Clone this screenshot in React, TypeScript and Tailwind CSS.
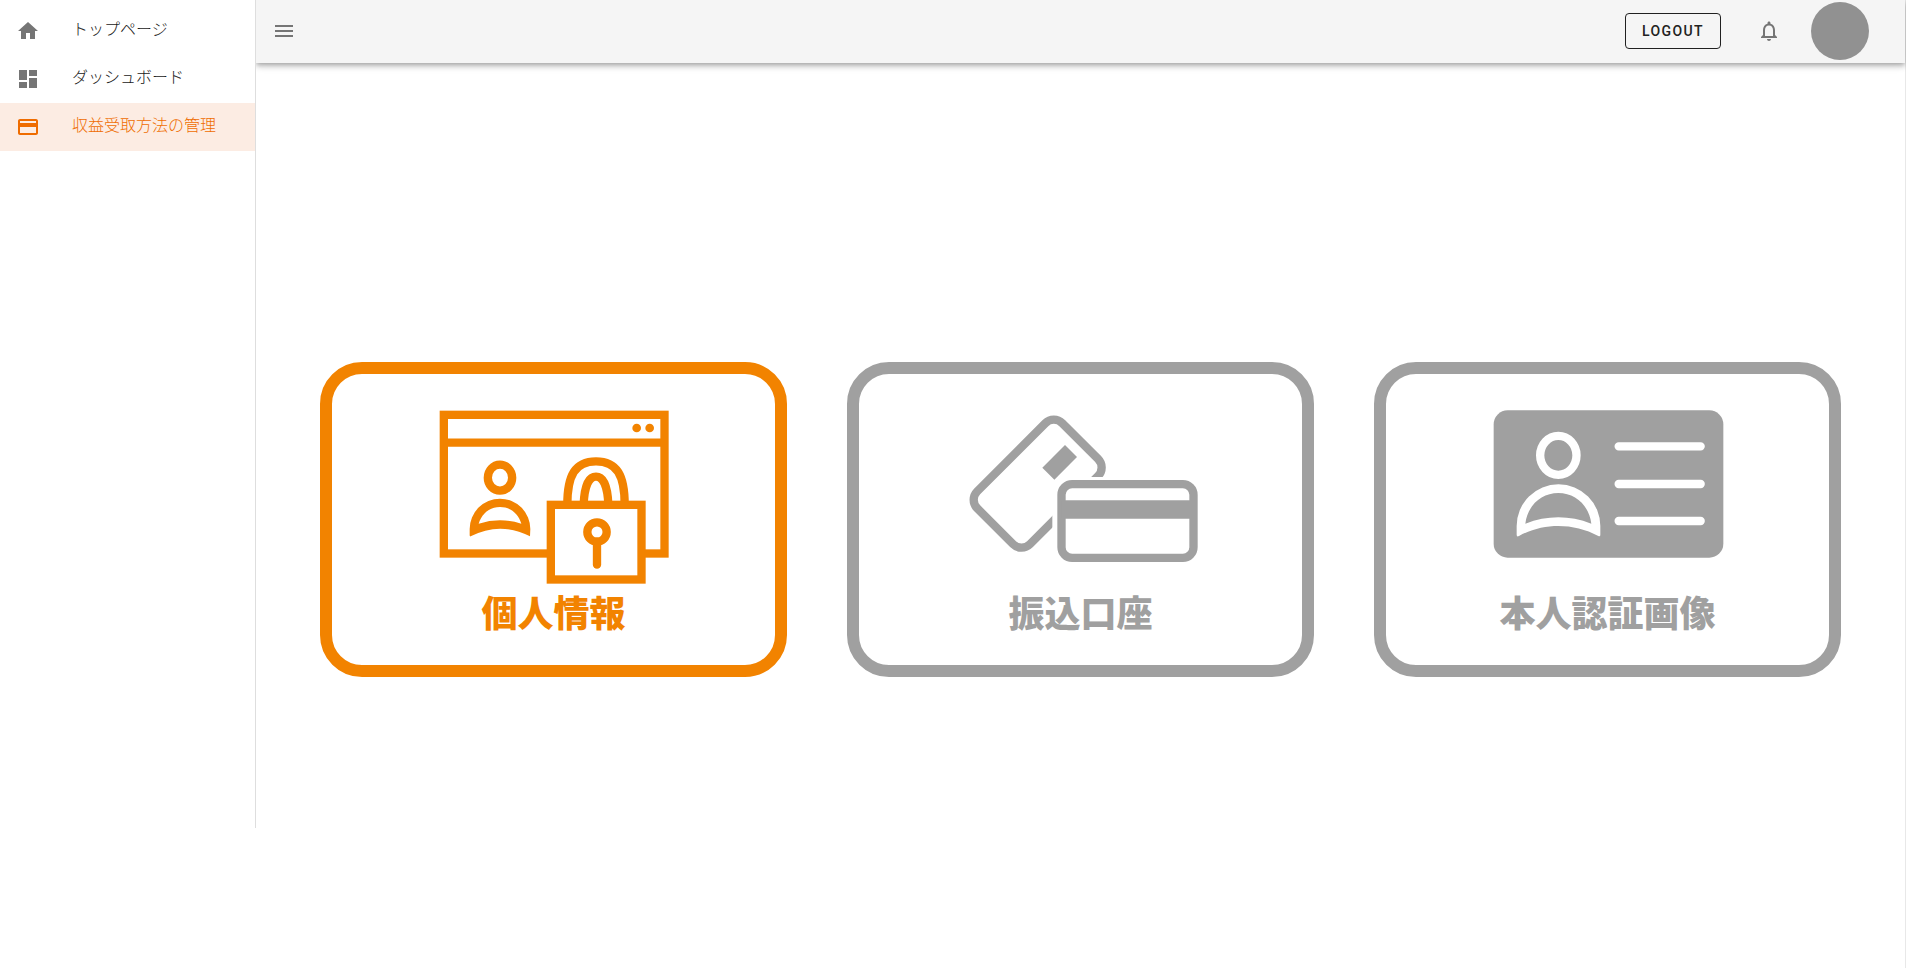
import type { ReactNode } from 'react'
import clsx from 'clsx'
import { MdDashboard, MdHome, MdMenu, MdNotificationsNone, MdOutlinePayment } from 'react-icons/md'

interface NavItem {
    label: string
    icon: ReactNode
    active?: boolean
}

interface Method {
    label: string
    drawing: ReactNode
    active?: boolean
}

const navItems: NavItem[] = [
    { label: 'トップページ', icon: <MdHome size={24} /> },
    { label: 'ダッシュボード', icon: <MdDashboard size={24} /> },
    { label: '収益受取方法の管理', icon: <MdOutlinePayment size={24} />, active: true },
]

function PersonalInfoDrawing() {
    return (
        <g fill="none" stroke="currentColor" strokeWidth="25">
            <rect x="20.5" y="14.5" width="662" height="416" />
            <path d="M20 98H682" />
            <circle cx="599" cy="54" r="13" fill="currentColor" stroke="none" />
            <circle cx="638" cy="54" r="13" fill="currentColor" stroke="none" />
            <ellipse cx="189" cy="203" rx="36.5" ry="39" />
            <path
                fill="currentColor"
                fillRule="evenodd"
                stroke="none"
                d="M98 357A91 91 0 0 1 280 357L279 379Q189 333 101 379Q98 380 98 376ZM125 341Q189 321 253 341C244 310 220 291 189 291S135 310 125 341Z"
            />
            {/* padlock */}
            <path d="M391 284C391 196 414 154 477 154S563 196 563 284" />
            <path d="M440 284C442 230 455 200 477 200S512 230 514 284" />
            <rect x="341.5" y="284.5" width="272" height="224" fill="white" />
            <circle cx="480" cy="366" r="29" />
            <path d="M480 395V464" strokeLinecap="round" />
        </g>
    )
}

function BankAccountDrawing() {
    return (
        <g fill="none" stroke="currentColor" strokeWidth="25">
            <rect x="40.5" y="109" width="361" height="224" rx="36" transform="rotate(-45 221 221)" />
            <rect x="265" y="201" width="437" height="270" fill="white" stroke="none" />
            <rect
                x="239"
                y="131.5"
                width="96"
                height="51"
                fill="currentColor"
                stroke="none"
                transform="rotate(-45 287 157)"
            />
            <rect x="292.5" y="222.5" width="396" height="221" rx="32" />
            <path d="M292 298.5H689" strokeWidth="55" />
        </g>
    )
}

function IdentityDrawing() {
    return (
        <g fill="none" stroke="white" strokeWidth="25">
            <rect x="8" y="1" width="689" height="442" rx="42" fill="currentColor" stroke="none" />
            <ellipse cx="202" cy="136" rx="54.5" ry="58.5" />
            <path
                fill="white"
                fillRule="evenodd"
                stroke="none"
                d="M77 348A125.5 125 0 0 1 328 348V374Q328 381 322 378C247 338 157 338 84 378Q77 382 77 374ZM103 341Q202 303 301 341C294 285 252 249 202 249S110 285 103 341Z"
            />
            <path d="M383 109H629M383 222H629M383 333H629" strokeLinecap="round" />
        </g>
    )
}

const methods: Method[] = [
    { label: '個人情報', drawing: <PersonalInfoDrawing />, active: true },
    { label: '振込口座', drawing: <BankAccountDrawing /> },
    { label: '本人認証画像', drawing: <IdentityDrawing /> },
]

function Sidebar() {
    return (
        <nav className="relative z-10 h-[828px] w-64 shrink-0 border-r border-[#dedede] bg-white pt-[7px]">
            <ul>
                {navItems.map((item) => (
                    <li key={item.label}>
                        <a
                            href="#"
                            className={clsx(
                                'flex h-12 items-center gap-8 px-4',
                                item.active ? 'bg-[#fcece3] text-[#ef6c00]' : 'text-[#757575]'
                            )}
                        >
                            {item.icon}
                            <span
                                className={clsx(
                                    'pb-1.5 text-base font-light whitespace-nowrap',
                                    !item.active && 'text-[#212121]'
                                )}
                            >
                                {item.label}
                            </span>
                        </a>
                    </li>
                ))}
            </ul>
        </nav>
    )
}

function Header() {
    return (
        <header className="flex h-[63px] items-center bg-[#f5f5f5] pr-9 pb-0.5 pl-4 text-[#757575] shadow-[0_2px_4px_-1px_rgba(0,0,0,0.2),0_4px_5px_0_rgba(0,0,0,0.14),0_1px_10px_0_rgba(0,0,0,0.12)]">
            <button type="button" aria-label="メニュー">
                <MdMenu size={24} />
            </button>
            <button
                type="button"
                className="mr-6 ml-auto h-9 w-24 rounded border border-[#212121] font-[Roboto,sans-serif] text-sm font-medium tracking-widest text-[#212121]"
            >
                LOGOUT
            </button>
            <button type="button" aria-label="通知" className="mr-[18px] flex size-12 items-center justify-center">
                <MdNotificationsNone size={24} />
            </button>
            <button type="button" aria-label="アカウント" className="size-[58px] rounded-full bg-[#919191]" />
        </header>
    )
}

export default function App() {
    return (
        <div className="flex min-h-screen items-start border-r border-[#e8e8e8] bg-white font-['Noto_Sans_CJK_JP',sans-serif]">
            <Sidebar />
            <div className="min-w-0 flex-1">
                <Header />
                <main className="grid grid-cols-3 gap-15 px-16 pt-[299px]">
                    {methods.map((method) => (
                        <button
                            key={method.label}
                            type="button"
                            className={clsx(
                                'flex flex-col items-center rounded-[42px] border-12 pt-9 pb-[27px]',
                                method.active ? 'border-[#f28300] text-[#f28300]' : 'border-[#a0a0a0] text-[#a0a0a0]'
                            )}
                        >
                            <svg viewBox="0 0 702 522" className="h-[174px] w-[234px]" aria-hidden="true">
                                {method.drawing}
                            </svg>
                            <span className="text-4xl leading-[54px] font-black">{method.label}</span>
                        </button>
                    ))}
                </main>
            </div>
        </div>
    )
}
